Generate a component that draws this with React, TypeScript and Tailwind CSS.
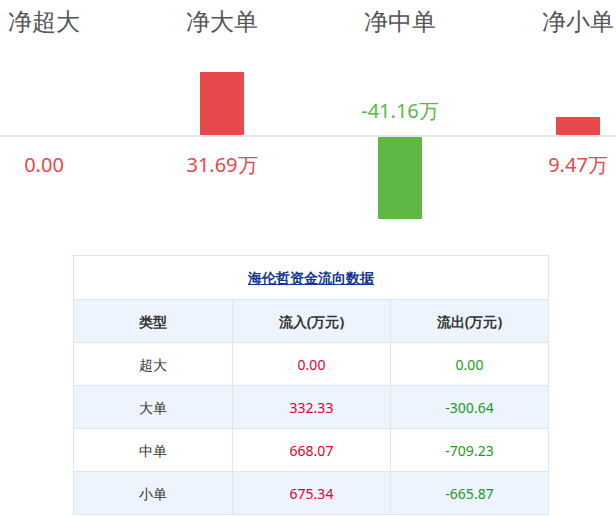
const font = "font-['Microsoft_YaHei','Noto_Sans_CJK_SC',sans-serif]";

const cols = [
  { title: "净超大", value: "0.00", up: 0, down: 0, neg: false },
  { title: "净大单", value: "31.69万", up: 63, down: 0, neg: false },
  { title: "净中单", value: "-41.16万", up: 0, down: 82, neg: true },
  { title: "净小单", value: "9.47万", up: 18, down: 0, neg: false },
];

const rows = [
  { type: "超大", inflow: "0.00", outflow: "0.00" },
  { type: "大单", inflow: "332.33", outflow: "-300.64" },
  { type: "中单", inflow: "668.07", outflow: "-709.23" },
  { type: "小单", inflow: "675.34", outflow: "-665.87" },
];

export default function App() {
  return (
    <div className={`w-[616px] h-[516px] overflow-hidden bg-white ${font}`}>
      <div className="flex ml-[-45px]">
        {cols.map((c) => (
          <div key={c.title} className="w-[178px] shrink-0 h-[45px] flex justify-center pt-[3px] text-[24px] leading-[36px] text-[#555]">
            {c.title}
          </div>
        ))}
      </div>
      <div className="flex ml-[-45px] h-[90px]">
        {cols.map((c) => (
          <div key={c.title} className="w-[178px] shrink-0 flex flex-col items-center justify-end">
            {c.neg && <div className="mb-[11px] text-[20px] leading-[26px] text-[#5cb843] font-['Liberation_Sans','Noto_Sans_CJK_SC',sans-serif]">{c.value}</div>}
            {c.up > 0 && <div className="w-[44px] bg-[#e8494a]" style={{ height: c.up }} />}
          </div>
        ))}
      </div>
      <div className="h-[2px] bg-[#e3e7ed]" />
      <div className="flex ml-[-45px] h-[100px]">
        {cols.map((c) => (
          <div key={c.title} className="w-[178px] shrink-0 flex flex-col items-center">
            {c.down > 0 ? (
              <div className="w-[44px] bg-[#5cb843]" style={{ height: c.down }} />
            ) : (
              <div className="mt-[15px] text-[20px] leading-[26px] text-[#e8494a] font-['Liberation_Sans','Noto_Sans_CJK_SC',sans-serif]">{c.value}</div>
            )}
          </div>
        ))}
      </div>
      <div className="mt-[18px] ml-[73px] w-[476px] border border-[#dce6f8] text-[14px]">
        <div className="h-[43px] flex items-center justify-center font-bold text-[#13368f] underline">
          海伦哲资金流向数据
        </div>
        <div className="grid grid-cols-3 h-[43px] bg-[#edf4fd] border-t border-[#dce6f8] font-bold text-[#333]">
          <div className="flex items-center justify-center">类型</div>
          <div className="flex items-center justify-center border-l border-[#dce6f8]">流入(万元)</div>
          <div className="flex items-center justify-center border-l border-[#dce6f8]">流出(万元)</div>
        </div>
        {rows.map((r, i) => (
          <div key={r.type} className={`grid grid-cols-3 h-[43px] border-t border-[#dce6f8] ${i % 2 === 1 ? "bg-[#edf4fd]" : "bg-white"}`}>
            <div className="flex items-center justify-center text-[#333]">{r.type}</div>
            <div className="flex items-center justify-center border-l border-[#dce6f8] text-[#e4002b]">{r.inflow}</div>
            <div className="flex items-center justify-center border-l border-[#dce6f8] text-[#1d9a20]">{r.outflow}</div>
          </div>
        ))}
      </div>
    </div>
  );
}
